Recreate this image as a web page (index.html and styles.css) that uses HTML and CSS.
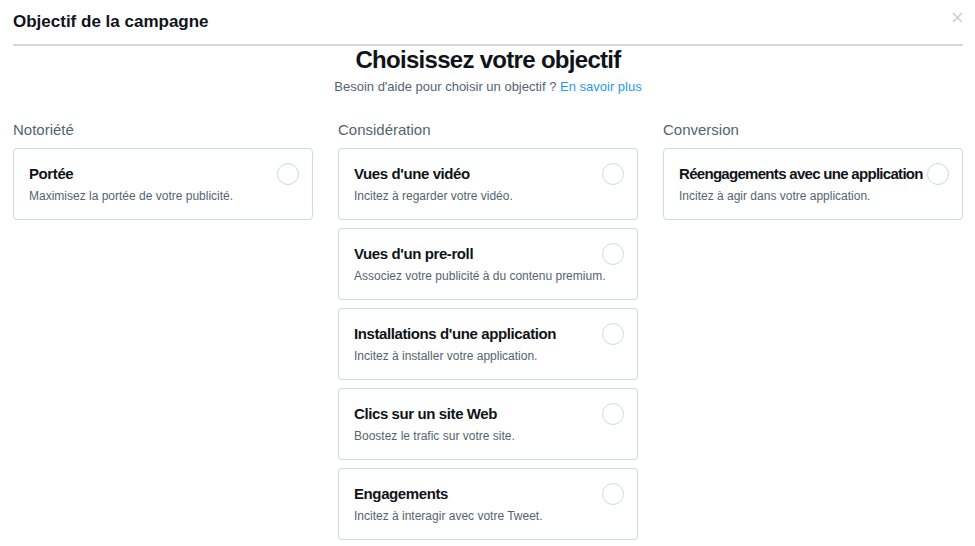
FILE: index.html
```html
<!DOCTYPE html>
<html lang="fr">
<head>
    <meta charset="UTF-8">
    <meta name="viewport" content="width=device-width, initial-scale=1.0">
    <title>Objectif de la campagne</title>
    <link rel="stylesheet" href="styles.css">
</head>
<body>
    <div class="modal">
        <div class="modal-header">
            <h2 class="modal-title">Objectif de la campagne</h2>
            <button class="close" aria-label="Fermer">
                <svg width="11" height="11" viewBox="0 0 11 11"><path d="M1 1L10 10M10 1L1 10" stroke="#c4cfd6" stroke-width="1.6" fill="none"/></svg>
            </button>
        </div>
        <h1 class="headline">Choisissez votre objectif</h1>
        <p class="subtitle">Besoin d'aide pour choisir un objectif ? <a href="#">En savoir plus</a></p>

        <div class="columns">
            <div class="column">
                <h3 class="column-title">Notoriété</h3>
                <div class="card">
                    <div class="card-text">
                        <div class="card-title">Portée</div>
                        <div class="card-desc">Maximisez la portée de votre publicité.</div>
                    </div>
                    <span class="radio"></span>
                </div>
            </div>
            <div class="column">
                <h3 class="column-title">Considération</h3>
                <div class="card">
                    <div class="card-text">
                        <div class="card-title">Vues d'une vidéo</div>
                        <div class="card-desc">Incitez à regarder votre vidéo.</div>
                    </div>
                    <span class="radio"></span>
                </div>
                <div class="card">
                    <div class="card-text">
                        <div class="card-title">Vues d'un pre-roll</div>
                        <div class="card-desc">Associez votre publicité à du contenu premium.</div>
                    </div>
                    <span class="radio"></span>
                </div>
                <div class="card">
                    <div class="card-text">
                        <div class="card-title">Installations d'une application</div>
                        <div class="card-desc">Incitez à installer votre application.</div>
                    </div>
                    <span class="radio"></span>
                </div>
                <div class="card">
                    <div class="card-text">
                        <div class="card-title">Clics sur un site Web</div>
                        <div class="card-desc">Boostez le trafic sur votre site.</div>
                    </div>
                    <span class="radio"></span>
                </div>
                <div class="card">
                    <div class="card-text">
                        <div class="card-title">Engagements</div>
                        <div class="card-desc">Incitez à interagir avec votre Tweet.</div>
                    </div>
                    <span class="radio"></span>
                </div>
            </div>
            <div class="column">
                <h3 class="column-title">Conversion</h3>
                <div class="card">
                    <div class="card-text">
                        <div class="card-title card-title-long">Réengagements avec une application</div>
                        <div class="card-desc">Incitez à agir dans votre application.</div>
                    </div>
                    <span class="radio"></span>
                </div>
            </div>
        </div>
    </div>
</body>
</html>
```

FILE: styles.css
```css
body {
    margin: 0;
    font-family: "Liberation Sans", Arial, sans-serif;
    color: #0f1419;
    background-color: #fff;
}
.modal {
    padding: 0 12px 0 13px;
}
.modal-header {
    display: flex;
    align-items: center;
    justify-content: space-between;
    height: 44px;
    border-bottom: 2px solid #cfd9de;
}
.modal-title {
    margin: 0;
    font-size: 17px;
    font-weight: bold;
}
.close {
    border: none;
    background: none;
    padding: 0;
    margin: -10px 0 0 0;
    cursor: pointer;
    line-height: 0;
}
.headline {
    margin: 0;
    text-align: center;
    font-size: 24px;
    line-height: 28px;
    font-weight: bold;
    letter-spacing: -0.7px;
}
.subtitle {
    margin: 5px 0 0;
    text-align: center;
    font-size: 13px;
    line-height: 16px;
    color: #536471;
}
.subtitle a {
    color: #1d9bf0;
    text-decoration: none;
}
.columns {
    display: grid;
    grid-template-columns: repeat(3, 300px);
    column-gap: 25px;
    margin-top: 26px;
}
.column-title {
    margin: 0 0 9px;
    font-size: 15px;
    line-height: 18px;
    font-weight: normal;
    color: #536471;
}
.card {
    display: flex;
    align-items: flex-start;
    height: 72px;
    box-sizing: border-box;
    border: 1px solid #cfd9de;
    border-radius: 4px;
    padding: 16px 13px 0 15px;
    margin-bottom: 8px;
}
.card-text {
    flex: 1;
    min-width: 0;
    white-space: nowrap;
}
.card-title {
    font-size: 15px;
    line-height: 18px;
    font-weight: bold;
    letter-spacing: -0.4px;
}
.card-title-long {
    letter-spacing: -0.7px;
}
.card-desc {
    margin-top: 5px;
    font-size: 12px;
    line-height: 16px;
    color: #536471;
}
.radio {
    flex: none;
    width: 20px;
    height: 20px;
    border: 1px solid #cfd9de;
    border-radius: 50%;
    margin-top: -2px;
    background-color: #fff;
}
```
